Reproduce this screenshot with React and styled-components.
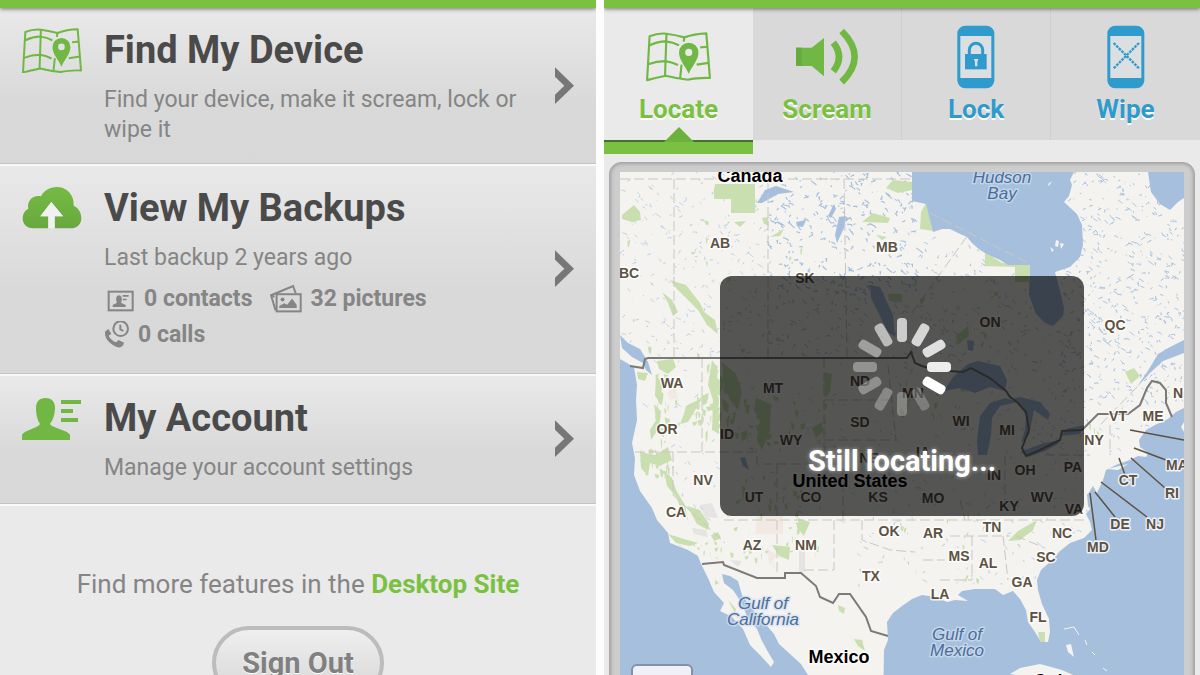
import React from 'react'
import styled, { createGlobalStyle, css } from 'styled-components'

const COLORS = {
  green: '#7ac142',
  icon_green: '#70b843',
  blue: '#2f9bcd',
  heading: '#4a4a4a',
  text: '#858585',
  panel: '#eaeaea',
  tab: '#d9d9d9',
  water: '#a5bfdd',
  land: '#f4f3f0',
  park: '#c9dfaf',
}

// small seeded generator so the lakes land in the same place on every load
const seeded = (seed) => () => {
  seed = (seed * 16807) % 2147483647
  return seed / 2147483647
}

const scatter = (seed, count, [x, y, w, h], size) => {
  const rand = seeded(seed)
  let d = ''
  for (let i = 0; i < count; i++) {
    const px = x + rand() * w
    const py = y + rand() * h
    const dx = (rand() - 0.3) * size
    const dy = (rand() - 0.5) * size
    d += `M${px.toFixed(1)} ${py.toFixed(1)}l${dx.toFixed(1)} ${dy.toFixed(1)}l${(dy / 2).toFixed(1)} ${(dx / 3).toFixed(1)}`
  }
  return d
}

const patches = (seed, count, [x, y, w, h], size) => {
  const rand = seeded(seed)
  let d = ''
  for (let i = 0; i < count; i++) {
    const px = x + rand() * w
    const py = y + rand() * h
    const s = size * (rand() - 0.5) * 2
    const t = size * (0.3 + rand())
    d += `M${px.toFixed(1)} ${py.toFixed(1)}l${s.toFixed(1)} ${(t / 3).toFixed(1)}l${(-s / 4).toFixed(1)} ${t.toFixed(1)}l${(-s / 2).toFixed(1)} ${(-t / 4).toFixed(1)}z`
  }
  return d
}

const LAKES = [
  { d: scatter(11, 260, [620, 172, 150, 186], 6), width: 0.6 },
  { d: scatter(27, 300, [768, 172, 150, 120], 7), width: 1.1 },
  { d: scatter(29, 90, [768, 285, 140, 72], 7), width: 0.8 },
  { d: scatter(31, 240, [900, 235, 160, 140], 6), width: 0.8 },
  { d: scatter(45, 560, [1060, 172, 124, 230], 6), width: 0.9 },
  { d: scatter(58, 90, [640, 360, 200, 160], 6), width: 0.6 },
  { d: scatter(63, 240, [840, 365, 250, 220], 6), width: 0.6 },
  { d: scatter(77, 50, [1030, 400, 120, 60], 5), width: 0.7 },
]

const PARKS = [
  patches(5, 20, [655, 358, 24, 88], 7),
  patches(7, 18, [680, 395, 24, 30], 6),
  patches(9, 22, [640, 446, 32, 30], 6),
  patches(15, 40, [708, 362, 30, 70], 8),
  patches(17, 26, [745, 390, 28, 60], 7),
  patches(19, 12, [790, 400, 40, 60], 5),
  patches(20, 26, [740, 475, 80, 40], 6),
  patches(21, 24, [730, 520, 86, 42], 5),
  patches(33, 14, [672, 540, 50, 18], 4),
  patches(37, 16, [900, 375, 80, 40], 5),
  patches(41, 14, [900, 490, 90, 90], 4),
  patches(47, 14, [625, 190, 130, 170], 5),
  patches(53, 14, [780, 240, 240, 100], 5),
  patches(59, 8, [1040, 400, 90, 60], 5),
]

const MAP_LABELS = [
  [720, 248, 'AB'], [629, 278, 'BC'], [805, 283, 'SK'], [887, 252, 'MB'], [672, 388, 'WA'],
  [773, 393, 'MT'], [860, 386, 'ND'], [913, 398, 'MN'], [860, 427, 'SD'], [961, 426, 'WI'],
  [990, 327, 'ON'], [1115, 330, 'QC'], [1118, 421, 'VT'], [1153, 421, 'ME'], [1178, 398, 'N'],
  [667, 434, 'OR'], [727, 439, 'ID'], [791, 445, 'WY'], [703, 485, 'NV'], [754, 502, 'UT'],
  [811, 502, 'CO'], [878, 502, 'KS'], [676, 517, 'CA'], [752, 550, 'AZ'], [806, 550, 'NM'],
  [889, 536, 'OK'], [871, 581, 'TX'], [869, 463, 'NE'], [1007, 435, 'MI'], [923, 457, 'IA'],
  [994, 480, 'IN'], [1025, 475, 'OH'], [1073, 472, 'PA'], [1094, 445, 'NY'], [933, 503, 'MO'],
  [1009, 511, 'KY'], [1042, 502, 'WV'], [1074, 514, 'VA'], [992, 532, 'TN'], [1062, 538, 'NC'],
  [933, 538, 'AR'], [959, 561, 'MS'], [988, 568, 'AL'], [1046, 562, 'SC'], [1022, 587, 'GA'],
  [940, 599, 'LA'], [1038, 622, 'FL'], [1098, 552, 'MD'], [1120, 529, 'DE'], [1155, 529, 'NJ'],
  [1172, 498, 'RI'], [1128, 485, 'CT'], [1177, 470, 'MA'],
]

const COUNTRY_LABELS = [
  [750, 182, 'Canada'],
  [850, 487, 'United States'],
  [839, 663, 'Mexico'],
  [1056, 687, 'Cuba'],
]

const WATER_LABELS = [
  [1002, 183, 'Hudson'], [1002, 199, 'Bay'],
  [763, 609, 'Gulf of'], [763, 625, 'California'],
  [957, 640, 'Gulf of'], [957, 656, 'Mexico'],
]

const SPOKES = [0.7, 0.76, 0.82, 0.9, 1, 0.24, 0.28, 0.3, 0.34, 0.36, 0.44, 0.6]

const MapIcon = ({ width }) => (
  <svg width={width} viewBox='65 85 181 137' fill='none' stroke={COLORS.icon_green} strokeWidth='6' strokeLinejoin='round'>
    <path d='M75 97Q100 87 122 90Q150 94 172 100Q200 90 233 89L243 213Q205 212 182 218Q148 214 120 207Q95 212 68 219Z' />
    <path d='M122 90L118 207M172 100L170 112M164 176L160 214' />
    <path d='M75 122Q98 111 120 111Q140 113 157 122M216 128L237 126M71 175Q95 166 119 166Q136 168 154 177M206 176L240 171' />
    <path
      d='M184 202C176 181 157 164 157 142A27 27 0 0 1 211 142C211 164 192 181 184 202ZM184 132A10 10 0 1 0 184 152A10 10 0 1 0 184 132Z'
      fill={COLORS.icon_green}
      fillRule='evenodd'
      stroke='none'
    />
  </svg>
)

const CloudIcon = () => (
  <svg width='60' viewBox='65 50 180 130'>
    <defs>
      <linearGradient id='cloud' x2='0' y2='1'>
        <stop offset='0' stopColor='#74bb43' />
        <stop offset='1' stopColor='#69a840' />
      </linearGradient>
    </defs>
    <path
      fill='url(#cloud)'
      d='M144 177H98C78 177 67 163 67 147C67 133 74 123 84 118C79 94 98 76 122 81C130 64 148 53 169 53C199 53 222 76 220 109C234 115 243 130 243 146C243 164 230 177 212 177H163V141H188L153 98L120 141H144Z'
    />
    <path fill='#f1f1f1' d='M144 177V141H120L153 98L188 141H163V177Z' />
  </svg>
)

const AccountIcon = () => (
  <svg width='60' viewBox='22 395 60 46' fill={COLORS.icon_green}>
    <path d='M22 439V434C24 429 38 427 40 423C37 419 36 413 36 407C36 401 39 397 45.500 397C52 397 55 401 55 407C55 413 53 419 50 423C52 427 68 429 70 434V439Z' />
    <path d='M61 399H81V403H61ZM61 408H73V412H61ZM61 417H78V421H61Z' />
  </svg>
)

const ContactsIcon = () => (
  <svg width='32' viewBox='315 346 96 90' fill='#858585'>
    <rect x='329' y='369' width='72' height='56' fill='none' stroke='#858585' strokeWidth='6' />
    <path d='M341 415V409L354 402C350 396 350 380 360 380C370 380 370 396 366 402L380 409V415ZM371 379H389V384H371ZM371 390H383V395H371Z' />
  </svg>
)

const PicturesIcon = () => (
  <svg width='32' viewBox='810 344 97 90' fill='#858585'>
    <path d='M827 424L813 378L880 350L888 372M819 377L822 385' fill='none' stroke='#858585' strokeWidth='6' />
    <rect x='830' y='375' width='73' height='52' fill='none' stroke='#858585' strokeWidth='6' />
    <circle cx='848' cy='391' r='6' />
    <path d='M838 417V411L853 402L862 407L877 388L891 408V417Z' />
  </svg>
)

const CallsIcon = () => (
  <svg width='26' viewBox='314 450 78 84' fill='none' stroke='#858585'>
    <circle cx='364' cy='473' r='22' strokeWidth='6' />
    <path d='M363 461V475L372 480' strokeWidth='6' />
    <path
      d='M318 481L327 474L336 488L328 494C332 503 341 511 351 514L357 507L374 515C372 526 364 530 356 529C335 524 312 501 318 481Z'
      fill='#858585'
      stroke='none'
    />
  </svg>
)

const Chevron = () => (
  <svg width='19' viewBox='762 200 57 112' fill='#777'>
    <path d='M762 201L819 256L762 311V283L790 256L762 229Z' />
  </svg>
)

const ScreamIcon = () => (
  <svg width='64' viewBox='580 84 192 172' fill='none' stroke={COLORS.icon_green}>
    <path d='M583 143H630L667 114V229L630 198H583Z' fill={COLORS.icon_green} stroke='none' />
    <path d='M583 143H600V198H583Z' fill='#67ab3e' stroke='none' />
    <path d='M695 128Q729 171 695 214M720 93Q798 171 720 246' strokeWidth='20' />
  </svg>
)

const PhoneIcon = ({ children }) => (
  <svg width='38' viewBox='171 76 114 192' fill='none'>
    <rect x='172' y='78' width='111' height='188' rx='24' fill={COLORS.blue} />
    <rect x='181' y='109' width='93' height='126' fill='#dcdfe1' />
    {children}
  </svg>
)

const Spinner = () => (
  <svg width='100' height='100' viewBox='-50 -50 100 100' role='img' aria-label='Loading'>
    {SPOKES.map((opacity, i) => (
      <rect key={i} x='-5' y='-49' width='10' height='24' rx='4' fill='#fff' opacity={opacity} transform={`rotate(${i * 30})`} />
    ))}
  </svg>
)

const WorldMap = () => (
  <MapDrawing viewBox='620 172 564 540'>
    <defs>
      <clipPath id='land'>
        <path d='M620 172H1184V408L1176 412L1168 419L1155 425L1146 430L1139 440L1140 447L1148 453L1146 457L1138 456L1130 460L1118 464L1106 470L1103 480L1097 493L1093 486L1088 494L1091 508L1086 514L1090 522L1092 530L1084 538L1070 543L1060 551L1050 562L1041 570L1037 580L1038 590L1042 604L1049 619L1050 632L1048 642L1041 642L1035 632L1028 622L1026 610L1020 599L1013 591L1003 595L995 589L985 589L975 589L962 591L958 595L968 601L955 600L947 602L935 597L922 595L912 599L902 606L893 613L887 622L888 640L884 650L883 712H840L808 675L801 664L790 654L779 644L774 634L762 620L752 609L742 595L738 581L730 576L722 574L724 583L733 590L741 602L747 616L757 629L762 641L768 652L774 662L771 667L760 655L750 645L743 629L732 617L720 611L724 603L714 592L708 578L701 564L698 556L688 550L670 543L668 533L657 520L652 508L640 491L634 475L635 458L632 443L637 420L636 400L637 385L634 367L620 359Z' />
      </clipPath>
    </defs>
    <rect x='620' y='172' width='564' height='540' fill={COLORS.water} />
    <g clipPath='url(#land)'>
      <rect x='620' y='172' width='564' height='540' fill={COLORS.land} />
      <path d='M757 516H783V534H755ZM766 548L777 555L770 565ZM667 392L676 388L678 398L670 400Z' fill='#f2e9e2' />
      <path d='M700 505L712 503L718 518L705 517ZM692 528L706 530L708 537L694 534ZM799 550H805V572H799ZM730 560L742 561L738 567Z' fill='#e6e3e4' />
      {LAKES.map(({ d, width }, i) => (
        <path key={i} d={d} fill='none' stroke={COLORS.water} strokeWidth={width} />
      ))}
      <g fill={COLORS.park}>
        {PARKS.map((d, i) => (
          <path key={i} d={d} />
        ))}
        <path d='M715 184H755V213H731V199H714V190ZM734 222L746 221L740 227ZM762 218L768 217L769 226L764 224ZM622 215L634 205L640 212L641 220L632 222L622 219Z' />
        <path d='M670 280L686 285L700 303L704 312L715 320L718 334L707 325L698 310L685 297L676 288ZM662 292L672 300L678 312L673 316L668 303Z' />
        <path d='M862 222L873 213L890 218L888 223ZM886 188L893 180L912 182V190L898 193ZM876 235L887 237L882 240ZM770 237L784 229L780 236Z' />
        <path d='M926 203L933 231L920 229L921 212ZM985 252L1002 263L1030 264L1029 282H1015V267L985 266Z' />
        <path d='M657 361L673 359L676 367L668 374L659 369ZM656 376L663 382L660 402L655 396ZM654 404L661 411L659 428L651 440L650 430L656 420ZM637 372L648 373L645 381L638 379ZM686 406L702 398L694 412L688 422L680 424L684 414ZM712 360L717 368L719 434L712 430L713 400L708 385Z' />
        <path d='M640 452L655 455L668 447L672 460L660 466L650 463L648 476L641 468ZM664 471L672 478L676 490L685 505L688 520L682 514L677 498L667 486ZM687 506L700 510L709 524L708 530L697 524ZM711 535L718 532L721 538L714 541ZM668 534L684 539L698 543L690 546L676 543Z' />
        <path d='M722 362L736 374L742 392L738 410L730 400L724 384ZM756 398L771 404L770 430L762 450L757 440L760 420L754 410ZM772 545L790 547L789 560L779 556ZM798 518L810 522L804 536L799 530ZM824 372L832 374L830 392L825 398ZM812 428L822 422L823 432L816 438ZM888 294L902 294V302L889 301ZM956 336L968 326L969 336L958 344Z' />
        <path d='M1008 541L1018 531L1037 520L1033 530L1020 540ZM1038 632H1045V643H1040ZM1125 372L1134 368L1140 376L1131 384ZM838 605L845 608L844 614L839 611ZM854 639L862 640L865 651L858 646ZM728 600L736 609L735 613ZM715 580L719 583L715 585Z' />
      </g>
    </g>
    <g fill={COLORS.water}>
      <path d='M912 172V201L926 204L933 232L942 229L950 229L958 233L967 237L972 243L980 250L985 253L1000 260L1008 265H1030L1029 295L1036 314L1045 323L1053 326L1063 316L1064 308L1061 295L1055 272L1070 267L1080 257L1083 245L1082 225L1077 214L1064 202L1069 196L1072 185L1070 180L1074 172Z' />
      <path d='M1148 172L1151 192L1160 204L1170 210L1178 202L1184 198V172Z' />
      <path d='M1184 340L1170 347L1158 354L1149 369L1137 387L1150 373L1163 361L1184 353Z' />
      <path d='M757 203L765 190L776 186L794 192L778 194L762 203ZM835 235L839 217L846 216L844 228L837 243ZM828 216L834 204L836 209L831 218ZM796 222L806 220L803 227L797 226Z' />
      <path d='M870 285L880 287L886 300L893 315L895 337L888 332L878 312L871 298Z' />
      <path d='M944 391L953 377L968 364L978 361L1000 366L1007 380L1005 391L990 387L975 393L960 388ZM967 340L974 341L973 351L968 350Z' />
      <path d='M977 440L978 455L987 455L991 435L992 418L1000 406L1018 402L1005 398L990 403L980 416Z' />
      <path d='M1013 399L1022 406L1026 417L1025 430L1021 443L1029 435L1034 410L1048 420L1050 414L1040 402L1020 397Z' />
      <path d='M1020 452L1028 457L1045 451L1058 444L1060 440L1044 443ZM1060 436L1080 434L1084 425L1066 429Z' />
      <path d='M620 335L628 343L640 349L648 362L652 375L646 370L643 363L632 357L622 348ZM740 458L745 457L749 470L743 466ZM1087 494L1090 494L1091 510L1088 506Z' />
    </g>
    <g fill={COLORS.land}>
      <path d='M1050 247L1054 250L1052 252ZM1056 240L1059 241L1058 247L1055 246ZM1060 243L1064 244L1061 249ZM1048 184L1052 181L1049 186ZM1107 469L1128 464L1118 470ZM1066 645L1071 644L1074 657L1068 652ZM1010 674L1020 668L1040 664L1062 670L1080 678V690H1040L1030 677ZM1184 422L1181 427L1184 432Z' />
      <path d='M1064 629L1074 627L1079 635M1085 640L1087 645M1092 652L1095 655M1103 668L1107 671' fill='none' stroke={COLORS.land} strokeWidth='1' />
    </g>
    <g fill='none' stroke='#c9c7c4' strokeWidth='1' strokeDasharray='10 4'>
      <path d='M620 179H912M674 179V358M768 179V358M844 179L847 358M912 313L968 235M930 213L1030 264M635 452H757V464H843V520M702 358V452M673 452V495L725 543M724 520H920M777 464V575M834 520V570H803M824 358V464M824 400H892M824 440H898M888 365L896 440M920 520H1085M862 520V540L890 550L915 552M923 560H945M972 536V580M1003 536L1008 580M940 580H972M920 455H960M950 536H1010M1005 456V500M960 500L965 520M1016 536L1045 548M1045 455H1090M1110 425V455M1137 387L1100 425' />
    </g>
    <g fill='none' stroke='#7b7a78' strokeWidth='2'>
      <path d='M630 366L643 368L645 359L648 358H907L911 352L915 363L922 366L935 370L963 372L971 368L990 378L1006 391L1010 397L1017 402L1026 412L1029 430L1022 448L1026 456L1040 450L1060 440L1062 431L1082 430L1098 414H1128L1140 405L1147 388L1152 381L1160 383L1166 390V403L1172 417' />
      <path d='M702 564L723 562L724 565L757 578H785V573H801L816 586L820 597L833 603L839 594H850L866 617L871 631L888 636' />
    </g>
    <path
      d='M1130 430L1184 440M1134 448L1166 460M1131 458L1165 488M1119 458L1125 475M1101 482L1147 517M1095 492L1115 517M1090 493L1096 540'
      fill='none'
      stroke='#5d5242'
      strokeWidth='1.500'
    />
    {MAP_LABELS.map(([x, y, name]) => (
      <StateLabel key={name} x={x} y={y}>{name}</StateLabel>
    ))}
    {COUNTRY_LABELS.map(([x, y, name]) => (
      <CountryLabel key={name} x={x} y={y}>{name}</CountryLabel>
    ))}
    {WATER_LABELS.map(([x, y, name]) => (
      <WaterLabel key={`${name}${x}`} x={x} y={y}>{name}</WaterLabel>
    ))}
  </MapDrawing>
)

const App = () => {
  return (
    <>
      <GlobalStyle />
      <Page>
        {/* main menu */}
        <Panel>
          <TopBar />
          <Menu>
            <MenuRow href='#find'>
              <MapIcon width={60} />
              <RowBody>
                <RowTitle>Find My Device</RowTitle>
                <RowText>Find your device, make it scream, lock or wipe it</RowText>
              </RowBody>
              <Arrow><Chevron /></Arrow>
            </MenuRow>
            <MenuRow href='#backups'>
              <CloudIcon />
              <RowBody>
                <RowTitle>View My Backups</RowTitle>
                <RowText>Last backup 2 years ago</RowText>
                <Stats>
                  <Stat><ContactsIcon />0 contacts</Stat>
                  <Stat><PicturesIcon />32 pictures</Stat>
                  <Stat><CallsIcon />0 calls</Stat>
                </Stats>
              </RowBody>
              <Arrow><Chevron /></Arrow>
            </MenuRow>
            <MenuRow href='#account'>
              <AccountIcon />
              <RowBody>
                <RowTitle>My Account</RowTitle>
                <RowText>Manage your account settings</RowText>
              </RowBody>
              <Arrow><Chevron /></Arrow>
            </MenuRow>
          </Menu>
          <Footer>
            <FooterText>
              Find more features in the <DesktopLink href='#desktop'>Desktop Site</DesktopLink>
            </FooterText>
            <SignOut type='button'>Sign Out</SignOut>
          </Footer>
        </Panel>

        {/* device locator */}
        <Panel>
          <TopBar />
          <Tabs>
            <Tab type='button' $active>
              <TabIcon><MapIcon width={65} /></TabIcon>
              Locate
              <Pointer viewBox='0 0 30 15'>
                <path d='M0 15L15 0L30 15Z' fill='#6bb13c' />
              </Pointer>
            </Tab>
            <Tab type='button'>
              <TabIcon><ScreamIcon /></TabIcon>
              Scream
            </Tab>
            <Tab type='button' $blue>
              <TabIcon>
                <PhoneIcon>
                  <path d='M208 166V151A20 20 0 0 1 248 151V166' stroke={COLORS.blue} strokeWidth='9' />
                  <path d='M195 163H260V209H195Z' fill={COLORS.blue} />
                  <path d='M222 178H235L232 188V200H225V188Z' fill='#dcdfe1' />
                </PhoneIcon>
              </TabIcon>
              Lock
            </Tab>
            <Tab type='button' $blue>
              <TabIcon>
                <PhoneIcon>
                  <path d='M191 130L267 206M267 130L191 206' stroke={COLORS.blue} strokeWidth='7' strokeDasharray='8 3' />
                </PhoneIcon>
              </TabIcon>
              Wipe
            </Tab>
          </Tabs>
          <MapFrame>
            <MapArea>
              <WorldMap />
              <Loading>
                <Spinner />
                <LoadingText>Still locating...</LoadingText>
              </Loading>
              <MapButton type='button' aria-label='Zoom in' />
            </MapArea>
          </MapFrame>
        </Panel>
      </Page>
    </>
  )
}

export default App

// styling
const GlobalStyle = createGlobalStyle`
  * {
    box-sizing: border-box;
  }
  body {
    margin: 0;
    background-color: #fdfdfd;
    font-family: Roboto, 'Liberation Sans', sans-serif;
  }
`
const Page = styled.main`
  display: grid;
  grid-template-columns: 1fr 1fr;
  gap: 8px;
  height: 100vh;
  overflow: hidden;
`
const Panel = styled.section`
  display: flex;
  flex-direction: column;
  min-width: 0;
  background-color: ${COLORS.panel};
`
const TopBar = styled.div`
  flex: none;
  height: 8px;
  position: relative;
  z-index: 2;
  background-color: ${COLORS.green};
  box-shadow: 0 1px 4px rgba(0, 0, 0, 0.5);
  clip-path: inset(0 0 -8px 0);
`
const Menu = styled.nav`
  display: flex;
  flex-direction: column;
`
const MenuRow = styled.a`
  display: flex;
  align-items: flex-start;
  gap: 22px;
  padding: 19px 22px 20px;
  border-top: 2px solid #f8f8f8;
  border-bottom: 1px solid #c4c4c4;
  background: linear-gradient(#e9e9e9, #d9d9d9 60%, #d8d8d8);
  color: ${COLORS.text};
  text-decoration: none;

  &:first-child {
    border-top: none;
    padding-bottom: 18px;
  }
  > svg {
    flex: none;
    margin-top: 1px;
  }
`
const RowBody = styled.div`
  flex: 1;
  min-width: 0;
`
const RowTitle = styled.h2`
  margin: 0 0 12px;
  font-size: 38px;
  line-height: 46px;
  font-weight: bold;
  color: ${COLORS.heading};
`
const RowText = styled.p`
  margin: 0;
  font-size: 23px;
  line-height: 30px;
`
const Stats = styled.div`
  display: flex;
  flex-wrap: wrap;
  column-gap: 18px;
  margin-top: 8px;
`
const Stat = styled.span`
  display: flex;
  align-items: center;
  gap: 8px;
  font-size: 23px;
  line-height: 36px;
  font-weight: bold;
`
const Arrow = styled.span`
  display: flex;
  align-self: center;
`
const Footer = styled.footer`
  display: flex;
  flex-direction: column;
  align-items: center;
  gap: 26px;
  padding-top: 62px;
  border-top: 2px solid #fafafa;
`
const FooterText = styled.p`
  margin: 0;
  font-size: 26px;
  line-height: 32px;
  color: ${COLORS.text};
`
const DesktopLink = styled.a`
  font-weight: bold;
  color: ${COLORS.green};
  text-decoration: none;
`
const SignOut = styled.button`
  padding: 15px 26px;
  border: 4px solid #bcbcbc;
  border-radius: 40px;
  background: linear-gradient(#efefef, #d6d6d6);
  font: bold 29px/36px Roboto, 'Liberation Sans', sans-serif;
  color: #808080;
  text-shadow: 0 1px 0 #fff;
`
const Tabs = styled.div`
  display: grid;
  grid-template-columns: repeat(4, 1fr);
  align-items: start;
`
const Tab = styled.button`
  display: flex;
  flex-direction: column;
  align-items: center;
  padding: 14px 0;
  border: none;
  border-right: 1px solid #cfcfcf;
  background-color: ${COLORS.tab};
  font: bold 26px/34px Roboto, 'Liberation Sans', sans-serif;
  color: ${(props) => (props.$blue ? COLORS.blue : COLORS.green)};
  text-shadow: 0 2px 0 #fff;

  &:last-child {
    border-right: none;
  }
  ${(props) =>
    props.$active &&
    css`
      position: relative;
      margin-bottom: 12px;
      border-right: none;
      border-bottom: 2px solid #47702a;
      background-color: ${COLORS.panel};
      box-shadow: 0 12px 0 ${COLORS.green};
    `}
`
const TabIcon = styled.span`
  display: flex;
  align-items: center;
  height: 70px;
`
const Pointer = styled.svg`
  position: absolute;
  left: 50%;
  bottom: -2px;
  width: 30px;
  height: 15px;
  margin-left: -15px;
`
const MapFrame = styled.div`
  flex: none;
  margin: 8px 5px 0;
  padding: 9px 10px;
  border: 1px solid #a8a8a8;
  border-radius: 12px;
  background-color: #cdcdcd;
  box-shadow: inset 0 0 4px rgba(0, 0, 0, 0.35);
`
const MapArea = styled.div`
  position: relative;
`
const MapDrawing = styled.svg`
  display: block;
  width: 100%;
`
const labelText = css`
  font-family: 'Liberation Sans', sans-serif;
  text-anchor: middle;
  paint-order: stroke;
  stroke: rgba(255, 255, 255, 0.8);
  stroke-width: 3px;
  stroke-linejoin: round;
`
const StateLabel = styled.text`
  ${labelText}
  font-size: 14px;
  font-weight: bold;
  fill: #5d5242;
`
const CountryLabel = styled.text`
  ${labelText}
  font-size: 18px;
  font-weight: bold;
  fill: #000;
`
const WaterLabel = styled.text`
  ${labelText}
  font-size: 17px;
  font-style: italic;
  fill: #4d6d99;
  stroke: rgba(210, 224, 240, 0.7);
`
const Loading = styled.div`
  position: absolute;
  top: 104px;
  left: 50%;
  transform: translateX(-50%);
  display: flex;
  flex-direction: column;
  align-items: center;
  gap: 26px;
  width: 364px;
  padding: 41px 0 37px;
  border-radius: 12px;
  background-color: rgba(0, 0, 0, 0.65);
`
const LoadingText = styled.p`
  margin: 0;
  font-size: 29px;
  line-height: 36px;
  font-weight: bold;
  color: #fff;
  text-shadow: 0 0 4px rgba(255, 255, 255, 0.6);
`
const MapButton = styled.button`
  position: absolute;
  top: 492px;
  left: 11px;
  width: 62px;
  height: 40px;
  border: 2px solid #8490a5;
  border-radius: 6px;
  background-color: #f0f1f8;
`
